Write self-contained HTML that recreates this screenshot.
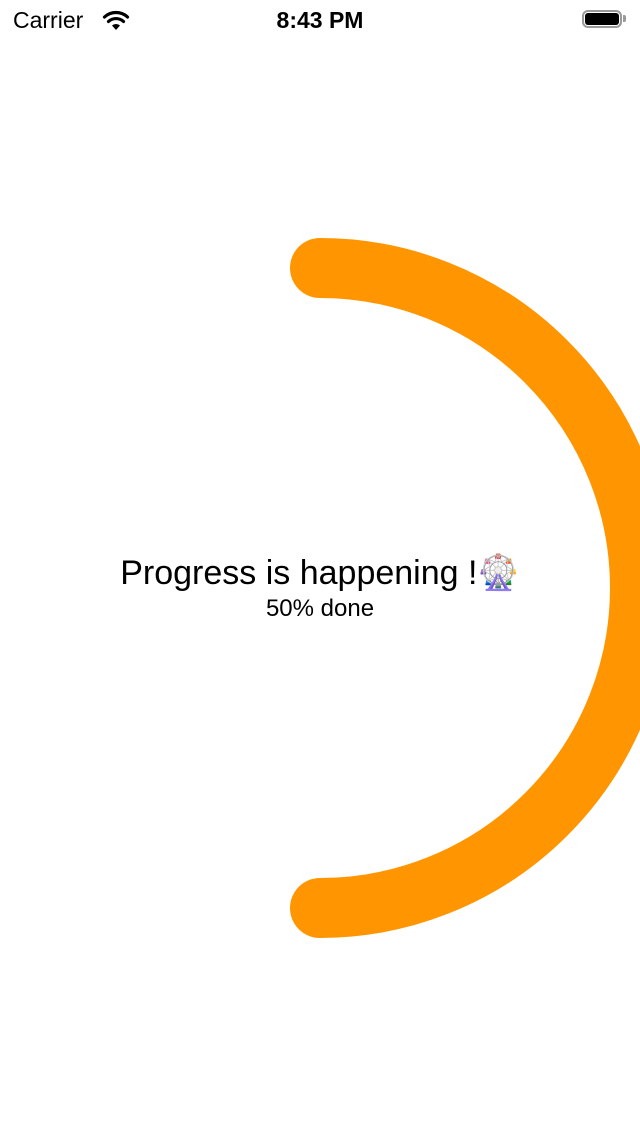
<!DOCTYPE html>
<html><head><meta charset="utf-8"><style>
html,body{margin:0;padding:0;width:640px;height:1136px;background:#fff;overflow:hidden;font-family:"Liberation Sans",sans-serif;position:relative}
.t{position:absolute;left:0;width:640px;text-align:center;color:#000}
</style></head><body>
<div style="position:absolute;left:13px;top:7px;font-size:23px">Carrier</div>
<svg style="position:absolute;left:100px;top:8px" width="32" height="24" viewBox="0 0 32 24">
<path d="M16 22 L12 17.5 A6 6 0 0 1 20 17.5 Z" fill="#000"/>
<path d="M8.5 13.5 A11 11 0 0 1 23.5 13.5" stroke="#000" stroke-width="3.2" fill="none" stroke-linecap="round"/>
<path d="M4.5 9 A17 17 0 0 1 27.5 9" stroke="#000" stroke-width="3.2" fill="none" stroke-linecap="round"/>
</svg>
<div style="position:absolute;left:0;width:640px;top:7px;text-align:center;font-size:23px;font-weight:bold">8:43 PM</div>
<div style="position:absolute;left:582px;top:10px;width:40px;height:18px;border:2px solid #999;border-radius:6px;box-sizing:border-box"></div>
<div style="position:absolute;left:585px;top:13px;width:34px;height:12px;background:#000;border-radius:3px"></div>
<div style="position:absolute;left:623px;top:15px;width:3px;height:7px;background:#999;border-radius:0 2px 2px 0"></div>
<svg style="position:absolute;left:0;top:0" width="640" height="1136">
<path d="M320 268 A320 320 0 0 1 320 908" stroke="#FF9500" stroke-width="60" fill="none" stroke-linecap="round"/>
</svg>
<div class="t" style="top:553px;font-size:34px">Progress is happening !🎡</div>
<div class="t" style="top:595px;font-size:24px">50% done</div>
</body></html>
